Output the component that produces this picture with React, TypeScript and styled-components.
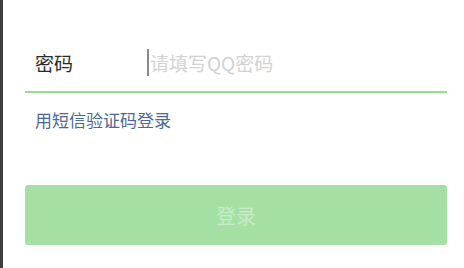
import styled, {createGlobalStyle} from "styled-components";

const GlobalStyle = createGlobalStyle`
 html, body {
  margin: 0;
  padding: 0;
  background: #fff;
 }
 * {
  box-sizing: border-box;
 }
`;

const App = () => {
 return (
  <>
   <GlobalStyle />
   <Page>
    <Form>
     <Field>
      <Label>密码</Label>
      <Caret />
      <Input type="password" placeholder="请填写QQ密码" />
     </Field>
     <SmsLink href="#">用短信验证码登录</SmsLink>
     <LoginButton disabled>登录</LoginButton>
    </Form>
   </Page>
  </>
 );
};

export default App;

const Page = styled.div`
 width: 464px;
 height: 268px;
 border-left: 3px solid #3f3f3f;
 padding: 34px 17px 0 22px;
 font-family: "Noto Sans CJK SC", "Noto Sans", sans-serif;
`;

const Form = styled.form`
 display: flex;
 flex-direction: column;
`;

const Field = styled.div`
 display: flex;
 align-items: center;
 height: 59px;
 padding-left: 10px;
 border-bottom: 2px solid #9edb93;
`;

const Label = styled.span`
 width: 112px;
 flex-shrink: 0;
 font-size: 19px;
 color: #2a2a2a;
`;

const Caret = styled.span`
 width: 2px;
 height: 27px;
 background: #8a8a8a;
 flex-shrink: 0;
`;

const Input = styled.input`
 flex: 1;
 min-width: 0;
 border: none;
 outline: none;
 padding: 0 0 0 1px;
 font-family: inherit;
 font-size: 19px;
 color: #333;
 background: transparent;

 &::placeholder {
  color: #d2d2d2;
 }
`;

const SmsLink = styled.a`
 margin-top: 17px;
 padding-left: 10px;
 font-size: 17px;
 line-height: 20px;
 color: #4d6898;
 text-decoration: none;
`;

const LoginButton = styled.button`
 margin-top: 55px;
 height: 60px;
 border: none;
 border-radius: 3px;
 background: #a4e0a4;
 color: #c7ecc7;
 font-family: inherit;
 font-size: 20px;
`;
